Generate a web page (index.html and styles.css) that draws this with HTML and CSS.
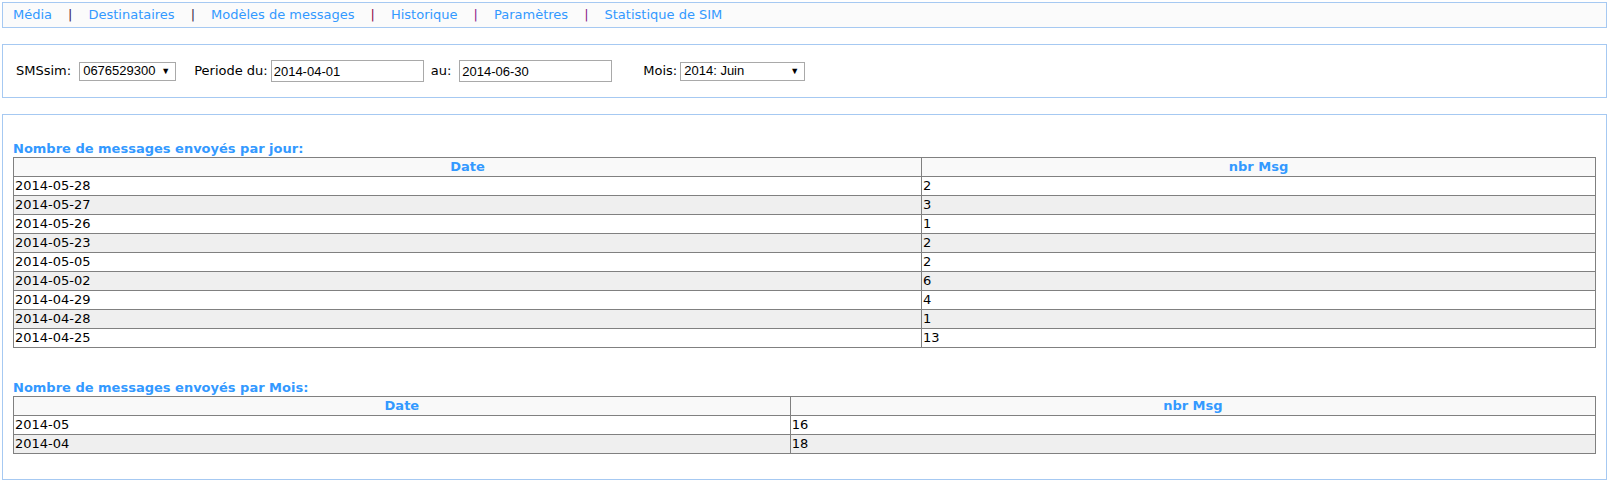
FILE: index.html
```html
<!DOCTYPE html>
<html lang="fr">
<head>
<meta charset="utf-8">
<title>Statistique de SIM</title>
<link rel="stylesheet" href="styles.css">
</head>
<body>
<nav class="menu">
  <a class="menu-link" href="#">Média</a><span class="sep sep-dark">|</span>
  <a class="menu-link" href="#">Destinataires</a><span class="sep sep-dark">|</span>
  <a class="menu-link" href="#">Modèles de messages</a><span class="sep sep-red">|</span>
  <a class="menu-link" href="#">Historique</a><span class="sep sep-purple">|</span>
  <a class="menu-link" href="#">Paramètres</a><span class="sep sep-purple">|</span>
  <a class="menu-link" href="#">Statistique de SIM</a>
</nav>

<form class="filters">
  <span class="lbl lbl-sim">SMSsim:</span>
  <span class="sel sel-sim"><span class="sel-text">0676529300</span><span class="sel-arrow">▼</span></span>
  <span class="lbl lbl-from">Periode du:</span>
  <input class="date-input" type="text" value="2014-04-01">
  <span class="lbl lbl-to">au:</span>
  <input class="date-input" type="text" value="2014-06-30">
  <span class="lbl lbl-month">Mois:</span>
  <span class="sel sel-month"><span class="sel-text">2014: Juin</span><span class="sel-arrow">▼</span></span>
</form>

<section class="stats">
  <h3 class="stats-title">Nombre de messages envoyés par jour:</h3>
  <table class="stats-table">
    <thead>
      <tr><th class="col-day">Date</th><th>nbr Msg</th></tr>
    </thead>
    <tbody>
      <tr><td>2014-05-28</td><td>2</td></tr>
      <tr><td>2014-05-27</td><td>3</td></tr>
      <tr><td>2014-05-26</td><td>1</td></tr>
      <tr><td>2014-05-23</td><td>2</td></tr>
      <tr><td>2014-05-05</td><td>2</td></tr>
      <tr><td>2014-05-02</td><td>6</td></tr>
      <tr><td>2014-04-29</td><td>4</td></tr>
      <tr><td>2014-04-28</td><td>1</td></tr>
      <tr><td>2014-04-25</td><td>13</td></tr>
    </tbody>
  </table>

  <h3 class="stats-title stats-title-month">Nombre de messages envoyés par Mois:</h3>
  <table class="stats-table">
    <thead>
      <tr><th class="col-month">Date</th><th>nbr Msg</th></tr>
    </thead>
    <tbody>
      <tr><td>2014-05</td><td>16</td></tr>
      <tr><td>2014-04</td><td>18</td></tr>
    </tbody>
  </table>
</section>
</body>
</html>
```

FILE: styles.css
```css
html, body {
  background: #ffffff;
}
body {
  margin: 2px;
  font-family: "DejaVu Sans", Verdana, sans-serif;
  font-size: 13px;
  line-height: 16px;
  color: #000000;
}

/* top menu */
.menu {
  display: flex;
  align-items: center;
  height: 24px;
  padding: 0 0 0 10px;
  border: 1px solid #a6c9f2;
  background: #fbfbfb;
}
.menu-link {
  color: #3399ff;
  text-decoration: none;
}
.sep {
  margin: 0 16px;
}
.sep-dark { color: #3a1a4a; }
.sep-red { color: #8a0a4a; }
.sep-purple { color: #8a1a8a; }

/* filter bar */
.filters {
  display: flex;
  align-items: center;
  margin: 16px 0 0 0;
  height: 52px;
  padding: 0 0 0 13px;
  border: 1px solid #a6c9f2;
}
.lbl {
  white-space: nowrap;
}
.lbl-sim { margin-right: 8px; }
.lbl-from { margin: 0 3px 0 18px; }
.lbl-to { margin: 0 8px 0 7px; }
.lbl-month { margin: 0 3px 0 31px; }

.sel {
  display: flex;
  align-items: center;
  justify-content: space-between;
  box-sizing: border-box;
  height: 19px;
  padding: 0 5px 0 3px;
  border: 1px solid #a9a9a9;
  background: #ffffff;
  font-family: "Liberation Sans", Arial, sans-serif;
  font-size: 13px;
}
.sel-sim { width: 97px; }
.sel-month { width: 125px; }
.sel-arrow {
  font-size: 9px;
  line-height: 10px;
}
.date-input {
  box-sizing: border-box;
  width: 153px;
  height: 22px;
  margin: 0;
  padding: 1px 2px;
  border: 1px solid #a9a9a9;
  font-family: "Liberation Sans", Arial, sans-serif;
  font-size: 13px;
  color: #000000;
  background: #ffffff;
}

/* stats block */
.stats {
  margin-top: 16px;
  padding: 26px 10px 25px 10px;
  border: 1px solid #a6c9f2;
}
.stats-title {
  margin: 0;
  font-size: 13px;
  line-height: 16px;
  font-weight: bold;
  color: #3399ff;
}
.stats-title-month {
  margin-top: 32px;
}
.stats-table {
  width: 100%;
  border-collapse: collapse;
  border: 1px solid #808080;
}
.stats-table th,
.stats-table td {
  border: 1px solid #808080;
  padding: 1px 1px;
  height: 16px;
  line-height: 16px;
  font-size: 13px;
}
.stats-table th {
  background: #f9f9f9;
  color: #3399ff;
  font-weight: bold;
  text-align: center;
}
.stats-table td {
  text-align: left;
}
.stats-table tbody tr:nth-child(even) td {
  background: #efefef;
}
.col-day { width: 57.4%; }
.col-month { width: 49.1%; }
```
